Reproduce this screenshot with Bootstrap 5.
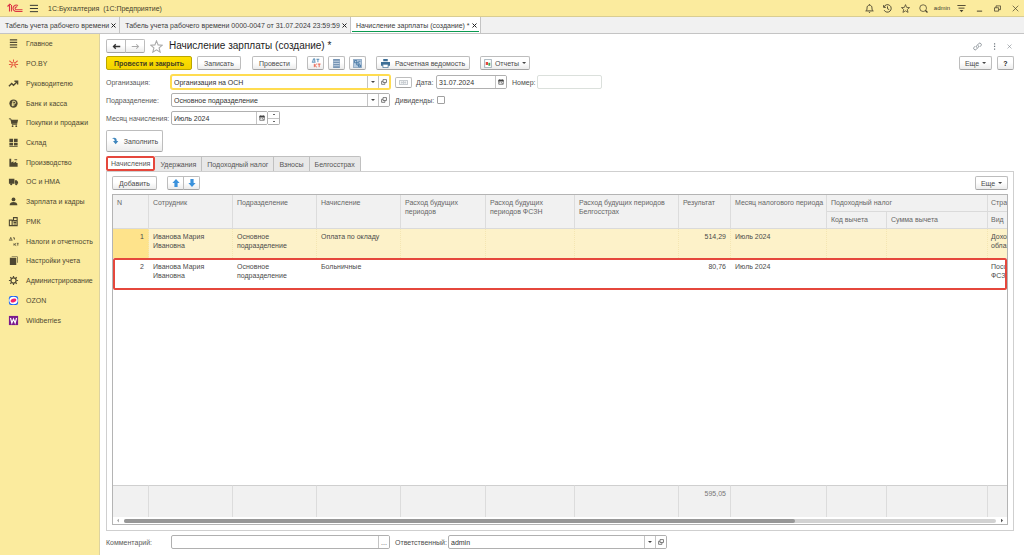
<!DOCTYPE html>
<html lang="ru">
<head>
<meta charset="utf-8">
<meta name="viewport" content="width=device-width, initial-scale=1">
<title>1С:Бухгалтерия — Начисление зарплаты</title>
<link href="https://cdn.jsdelivr.net/npm/bootstrap@5.3.0/dist/css/bootstrap.min.css" rel="stylesheet">
<style>
  body { font: 7px/9px "Liberation Sans", Arial, sans-serif; color: #4d4d4d; background: #fff; }
  svg { display: block; flex: none; }
  a { color: inherit; text-decoration: none; }
  .ic { width: 9px; height: 9px; fill: none; stroke: currentColor; stroke-width: 1; }
  .solid { fill: currentColor; stroke: none; }

  .topbar { height: 17px; background: #fbeb9e; border-bottom: 1px solid #d9cd92; color: #453f2c; }
  .topbar .logo { margin: 0 6px 0 7px; }
  .topbar .product { margin-left: 10px; }
  .topbar .cell { width: 18px; height: 16px; padding: 0; border: 0; background: none; color: inherit; display: flex; align-items: center; justify-content: center; }
  .topbar .user { width: 20px; font-size: 6px; }
  .wintabs { height: 17px; background: #f1f1f1; border-bottom: 1px solid #c4c4c4; color: #3c3c3c; }
  .wintab { position: relative; padding: 0 3px 0 5px; border-right: 1px solid #c4c4c4; gap: 2px; }
  .wintab svg { width: 5px; height: 5px; stroke: #222; stroke-width: 2; }
  .wintab.current { background: #fff; }
  .wintab.current::after { content: ""; position: absolute; left: 1px; right: 1px; bottom: 1px; height: 1px; background: #0a9a50; }

  .side { width: 100px; flex: none; background: #fbeb9e; border-right: 1px solid #ddd3a0; color: #4e4832; }
  .side nav { display: grid; grid-auto-rows: 1fr; height: 296px; }
  .side a { display: flex; align-items: center; gap: 7px; padding-left: 8px; }
  .side svg { width: 11px; height: 11px; }

  .work { padding: 5px 10px 6px 6px; min-width: 0; }
  .btn.b1 { font-size: 7px; line-height: 9px; height: 14px; padding: 0 5px; border: 1px solid #bdbdbd; border-bottom-color: #a4a4a4; border-radius: 2px; color: #4a4a4a; background: linear-gradient(#fff 45%, #ececec); display: inline-flex; align-items: center; justify-content: center; gap: 5px; white-space: nowrap; }
  .btn.b1.main { background: linear-gradient(#ffe100, #f2d200); border-color: #bba600; color: #453f20; font-weight: bold; }
  .btn.b1.sq { width: 17px; padding: 0; }
  .btn.b1.drop { padding: 0 2px; gap: 3px; }
  .btn.b1.fill { height: 22px; width: 57px; padding: 0; }
  .caret { width: 4px; height: 2px; flex: none; background: #444; clip-path: polygon(0 0, 100% 0, 50% 100%); }
  h1 { font-size: 10px; line-height: 12px; margin: 0 0 0 6px; color: #1d1d1d; font-weight: normal; }
  .formtools { gap: 9px; padding-right: 2px; }

  .lbl { width: 65px; flex: none; white-space: nowrap; color: #5a5a5a; }
  .fld { height: 14px; border: 1px solid #b0b0b0; border-radius: 2px; background: #fff; display: flex; overflow: hidden; }
  .fld input { min-width: 0; flex: 1; border: 0; padding: 1px 2px 0; font-size: 7px; line-height: 11px; color: #333; background: none; outline: 0; }
  .fld button { width: 11px; flex: none; border: 0; border-left: 1px solid #c4c4c4; background: #fff; padding: 0; display: flex; align-items: center; justify-content: center; color: #555; }
  .fld svg { width: 6px; height: 6px; }
  .wide { width: 219px; }
  .hot { border-color: #ffdc50; box-shadow: 0 0 0 1px #ffdc50; }
  .date { width: 71px; }
  .pale { border-color: #dbe0dc; width: 65px; }
  .tick { width: 8px; height: 8px; margin: 0; appearance: none; border: 1px solid #a0a0a0; border-radius: 1px; background: #fff; }
  .spin { width: 12px; flex-direction: column; border-radius: 0 2px 2px 0; border-left: 0; }
  .spin button { width: 100%; flex: 1; border-left: 0; }
  .spin button + button { border-top: 1px solid #c4c4c4; }
  .spin button::before { content: ""; width: 2px; height: 1px; background: #666; }

  .sect button { height: 15px; border: 1px solid #c0c0c0; border-left: 0; border-bottom: 0; background: #e8e8e8; color: #555; font-size: 7px; line-height: 9px; padding: 0 5px; }
  .sect button:last-child { border-radius: 0 2px 0 0; }
  .sect button.current { background: #fff; border: 2px solid #e5473c; border-radius: 2px; padding: 0 3px; }
  .pane { border: 1px solid #cfcfcf; padding: 4px 5px 5px; flex: 1; }
  .gridbox { border: 1px solid #b4b4b4; flex: 1; margin-top: 4px; overflow: hidden; }
  .gridbox table { table-layout: fixed; width: 100%; border-collapse: separate; border-spacing: 0; color: #4a4a4a; }
  .gridbox th, .gridbox td { font-weight: normal; vertical-align: top; padding: 3px 4px 0; border-right: 1px solid #dcdcdc; }
  .gridbox th { background: #f1f1f1; color: #666; height: 17px; border-bottom: 1px solid #dadada; }
  .gridbox td { height: 32px; border-color: transparent; }
  .gridbox tr > :last-child:not([rowspan]) { border-right: 0; white-space: nowrap; padding-left: 3px; padding-right: 0; }
  .gridbox .sel td { height: 29px; background: #fdf2c9; border-right: 1px dotted #f4e6b2; }
  .gridbox .sel td:first-child { background: #fee38b; }
  .gridbox .marked { outline: 2px solid #e5473c; outline-offset: -2px; border-radius: 2px; }
  .gridbox .marked td { padding-top: 4px; }
  .gridbox .totals td { background: #f1f1f1; height: 32px; border-right: 1px solid #dcdcdc; border-top: 1px solid #cfcfcf; color: #777; }
  .hbar { height: 7px; padding: 0 4px; gap: 5px; }
  .hbar .track { flex: 1; height: 4px; border-radius: 2px; background: #d2d2d2; }
  .hbar .thumb { height: 4px; border-radius: 2px; background: #979797; }
  .tri { width: 2px; height: 4px; background: #555; clip-path: polygon(0 0, 100% 50%, 0 100%); }
  .tri.back { background: #aaa; clip-path: polygon(100% 0, 0 50%, 100% 100%); }
</style>
</head>
<body class="d-flex flex-column min-vh-100">

<svg width="0" height="0" class="position-absolute" aria-hidden="true">
  <symbol id="x" viewBox="0 0 10 10"><path d="M1 1l8 8M9 1l-8 8"/></symbol>
  <symbol id="star" viewBox="0 0 12 12"><path d="M6 .8l1.5 3.7 3.9.3-3 2.5 1 3.9L6 9.1l-3.4 2.1 1-3.9-3-2.5 3.9-.3z"/></symbol>
  <symbol id="open" viewBox="0 0 8 8"><path d="M2.7.8h4.6v3.8H2.7zM2.7 3H.8v4.1h4.4V4.6"/></symbol>
  <symbol id="cal" viewBox="0 0 8 8"><path d="M1 2h6v5H1z" fill="none" stroke="#555"/><path d="M.5 1h7v2.2h-7zM2 0h1v1H2zM5 0h1v1H5zM2 4h1v1H2zM4 4h1v1H4zM5 5.500h1v1H5z" fill="#444" stroke="none"/></symbol>
</svg>

<header class="topbar d-flex align-items-center">
  <svg width="16" height="10" viewBox="0 0 32 20" class="logo" fill="none" stroke="#dc3545" stroke-width="2.200" role="img" aria-label="1С"><path d="M1 7l4-4v14M9 4v13M5 3h3"/><path d="M22 5a6.500 6.500 0 1 0-4 12h13"/><path d="M20.500 8a3 3 0 1 0-2.500 5.500h13"/></svg>
  <button class="btn p-0 border-0" aria-label="Меню"><svg class="ic" viewBox="0 0 10 10"><path d="M1 1.500h9M1 5h9M1 8.500h9"/></svg></button>
  <span class="product">1С:Бухгалтерия &nbsp;(1С:Предприятие)</span>
  <div class="d-flex ms-auto">
    <button class="cell" aria-label="Уведомления"><svg class="ic" viewBox="0 0 12 12"><path d="M1 9.200c1.500-1 1.700-2 1.700-4C2.700 3 4 1.600 6 1.600S9.300 3 9.300 5.200c0 2 .2 3 1.700 4zM6 .3v1.200M4.800 10.500c.6 1 1.800 1 2.400 0" stroke-width="1.200"/></svg></button>
    <button class="cell" aria-label="История"><svg class="ic" viewBox="0 0 12 12"><path d="M1.300 4A5 5 0 1 1 1.500 8.200M.8 1.500v3h3M6 3.200v3.100l2.300 1.200" stroke-width="1.200"/></svg></button>
    <button class="cell" aria-label="Избранное"><svg class="ic"><use href="#star"/></svg></button>
    <button class="cell" aria-label="Поиск"><svg class="ic" viewBox="0 0 12 12"><circle cx="5.500" cy="5.500" r="4.500"/><path d="M8.500 8.500l2.800 2.800" stroke-width="1.800"/></svg></button>
    <a href="#" class="cell user">admin</a>
    <button class="cell" aria-label="Настройки"><svg class="ic" viewBox="0 0 12 12"><path d="M.5 2h11M2 5.500h8" stroke-width="1.200"/><path d="M3.500 8h5L6 11z" fill="currentColor" stroke="none"/></svg></button>
    <button class="cell" aria-label="Свернуть"><svg class="ic" viewBox="0 0 12 12"><path d="M2.500 9.500h7" stroke-width="1.300"/></svg></button>
    <button class="cell" aria-label="Развернуть"><svg class="ic" viewBox="0 0 12 12"><path d="M2 5h5.500v4.500H2zM4 5V2.500h6v5H7.500"/></svg></button>
    <button class="cell" aria-label="Закрыть"><svg class="ic" style="width:7px"><use href="#x"/></svg></button>
  </div>
</header>

<div class="wintabs d-flex">
  <a href="#" class="wintab d-flex align-items-center">Табель учета рабочего времени <svg><use href="#x"/></svg></a>
  <a href="#" class="wintab d-flex align-items-center">Табель учета рабочего времени 0000-0047 от 31.07.2024 23:59:59 <svg><use href="#x"/></svg></a>
  <a href="#" class="wintab current d-flex align-items-center">Начисление зарплаты (создание) * <svg><use href="#x"/></svg></a>
</div>

<div class="d-flex flex-grow-1">
  <aside class="side">
    <nav aria-label="Разделы">
      <a href="#"><svg class="ic" viewBox="0 0 12 12"><path d="M2 2h8M2 4.700h8M2 7.400h8M2 10.100h8" stroke-width="1.300"/></svg>Главное</a>
      <a href="#"><svg class="ic" viewBox="0 0 12 12" style="color:#e4573f"><path d="M6 4V1.500M4.500 5.500L1.500 3M7.500 5.500l3-2.500M1 7h3M8 7h3M5 7.500L3 10.500M7 7.500l2 3" stroke-width="1.100"/><circle cx="6" cy="6" r="1.500"/></svg>PO.BY</a>
      <a href="#"><svg class="ic" viewBox="0 0 12 12"><path d="M1 9l3-3 2 2 4-4M7 3.500h3.500V7" stroke-width="1.500"/></svg>Руководителю</a>
      <a href="#"><svg class="ic" viewBox="0 0 12 12"><circle cx="6" cy="6" r="4.500" class="solid"/><path d="M5.200 9V3.500h1.500a1.500 1.500 0 0 1 0 3H4M4 7.800h3" stroke="#fbeb9e"/></svg>Банк и касса</a>
      <a href="#"><svg class="ic" viewBox="0 0 12 12"><path d="M1 2h2l1.500 6H10" /><path d="M3 3h8L10 7.300H4z" class="solid"/><circle cx="5" cy="10" r="1" class="solid"/><circle cx="9" cy="10" r="1" class="solid"/></svg>Покупки и продажи</a>
      <a href="#"><svg class="ic solid" viewBox="0 0 12 12"><path d="M1.500 2h4v3.500h-4zM6.500 2h4v3.500h-4zM1.500 6.300h4v3h-4zM6.500 6.300h4v3h-4zM1.500 10h9v.8h-9z"/></svg>Склад</a>
      <a href="#"><svg class="ic solid" viewBox="0 0 12 12"><path d="M1.500 10.500V2h2v4L6 4.500V6.500L9 5v1.500h1.500v4z"/><path d="M7 2.500h3v1H7z"/></svg>Производство</a>
      <a href="#"><svg class="ic solid" viewBox="0 0 12 12"><path d="M1 3h6v5.500H1zM7.500 4.500h2L11 6.500v2H7.500z"/><circle cx="3.500" cy="9" r="1.200"/><circle cx="9" cy="9" r="1.200"/></svg>ОС и НМА</a>
      <a href="#"><svg class="ic solid" viewBox="0 0 12 12"><circle cx="6" cy="3.700" r="2.100"/><path d="M1.800 10.200c0-3 1.800-3.700 4.200-3.700s4.200.7 4.200 3.700z"/></svg>Зарплата и кадры</a>
      <a href="#"><svg class="ic" viewBox="0 0 12 12"><path d="M1.500 4.500h3v6h-3zM4.500 5h5.500v5.500H4.500zM6 5V1.800h4V5M6 7h3M6 8.800h3" stroke-width="1.200"/></svg>РМК</a>
      <a href="#"><svg class="ic" viewBox="0 0 12 12"><path d="M1 4.500h4M2 4l1-2.500L4 4M5.500 2H7v2M6.500 8v2.500M9 8l-2 1.200L9 10.500M10 8h1.500M10.700 8v2.500" stroke-width=".9"/></svg>Налоги и отчетность</a>
      <a href="#"><svg class="ic solid" viewBox="0 0 12 12"><path d="M4 1.500h6.500v7H9.800V2.200H4zM2 3h7v8H2z"/></svg>Настройки учета</a>
      <a href="#"><svg class="ic" viewBox="0 0 12 12"><circle cx="6" cy="6" r="2.800" stroke-width="1.300"/><path d="M6 1v2M6 9v2M1 6h2M9 6h2M2.500 2.500l1.300 1.300M8.200 8.200l1.300 1.300M9.500 2.500L8.200 3.800M3.800 8.200L2.500 9.500" stroke-width="1.300"/></svg>Администрирование</a>
      <a href="#"><svg viewBox="0 0 12 12"><rect x="1" y="1" width="10" height="10" rx="2.500" fill="#1660f5"/><ellipse cx="6" cy="6" rx="4.600" ry="4" fill="#fff"/><ellipse cx="6" cy="6" rx="3.300" ry="1.900" transform="rotate(-20 6 6)" fill="#f5206b"/></svg>OZON</a>
      <a href="#"><svg viewBox="0 0 12 12"><rect x="1" y="1" width="10" height="10" fill="#7b1a8c"/><path d="M2.700 3.300L4.200 8.700 6 4.500l1.800 4.200 1.500-5.400" fill="none" stroke="#fff" stroke-width="1.300"/></svg>Wildberries</a>
    </nav>
  </aside>

  <main class="work flex-grow-1 d-flex flex-column">
    <div class="d-flex align-items-center">
      <div class="btn-group">
        <button class="btn b1" style="width:20px" aria-label="Назад"><svg class="ic" style="color:#333" viewBox="0 0 12 12"><path d="M11 6H2M5 3L2 6l3 3" stroke-width="1.800"/></svg></button>
        <button class="btn b1" style="width:20px" aria-label="Вперед"><svg class="ic" style="color:#aaa" viewBox="0 0 12 12"><path d="M1 6h9M7 3l3 3-3 3" stroke-width="1.400"/></svg></button>
      </div>
      <svg class="ic" style="width:13px;height:13px;color:#aaa;margin-left:5px"><use href="#star"/></svg>
      <h1>Начисление зарплаты (создание) *</h1>
      <div class="formtools d-flex ms-auto align-items-center text-secondary">
        <svg class="ic" viewBox="0 0 12 12"><path d="M5 7.500a2 2 0 0 1 0-2.500l2.500-2.800a2 2 0 0 1 3 2.800L9 6.500M7 4.500A2 2 0 0 1 7 7L4.500 9.800a2 2 0 0 1-3-2.800L3 5.500"/></svg>
        <svg class="ic solid" style="width:7px" viewBox="0 0 8 12"><path d="M3.300 1.500h1.600v1.800H3.300zM3.300 5h1.600v1.800H3.300zM3.300 8.500h1.600v1.800H3.300z"/></svg>
        <svg class="ic" style="width:5px"><use href="#x"/></svg>
      </div>
    </div>

    <div class="d-flex align-items-center" style="margin-top:3px">
      <button class="btn b1 main" style="width:86px">Провести и закрыть</button>
      <button class="btn b1" style="width:44px;margin-left:5px">Записать</button>
      <button class="btn b1" style="width:45px;margin-left:11px">Провести</button>
      <button class="btn b1 sq" style="margin-left:10px" aria-label="Дт Кт"><svg width="10" height="10" viewBox="0 0 12 12" fill="none"><path d="M1 5h4.500M2 4.500L3 1h1.500v3.500M6.500 1.500H10M8.300 1.500V5" stroke="#3a78a8"/><path d="M4 7v4M7 7L4.500 9 7 11M8 7.300h3.500M9.800 7v4" stroke="#e8503a"/></svg></button>
      <button class="btn b1 sq" style="margin-left:4px" aria-label="Список"><svg width="9" height="9" viewBox="0 0 12 12"><path fill="#7795b5" d="M1.500 0h9v12h-9z"/><path stroke="#dbe6f0" d="M2 3h8M2 6h8M2 9h8"/></svg></button>
      <button class="btn b1 sq" style="margin-left:4px" aria-label="Структура"><svg width="9" height="9" viewBox="0 0 12 12" fill="none"><path fill="#b5cbe0" stroke="#7795b5" d="M.5.5h11v11H.5z"/><path stroke="#376b9c" d="M2 2h3v3H2zM5 5h3v3H5zM7.500 8H10v2.500H7.500zM7 3h3"/></svg></button>
      <button class="btn b1" style="width:94px;margin-left:10px"><svg width="9" height="9" viewBox="0 0 12 12"><path fill="#3e6f96" d="M3 0h6v3H3zM0 4h12v5H0z"/><path fill="#fff" stroke="#3e6f96" d="M2.500 7h7v4.500h-7z"/></svg>Расчетная ведомость</button>
      <button class="btn b1 drop" style="width:50px;margin-left:10px"><svg width="8" height="9" viewBox="0 0 10 12"><path fill="#fff" stroke="#8899a5" d="M.5.500h9v11h-9z"/><path fill="#e5473c" d="M2 4h3v4H2z"/><path fill="#3da452" d="M5.500 5H8v4H5.500z"/></svg>Отчеты<i class="caret"></i></button>
      <button class="btn b1 drop ms-auto" style="width:33px">Еще<i class="caret"></i></button>
      <button class="btn b1 sq" style="margin-left:5px;color:#222" aria-label="Справка"><b>?</b></button>
    </div>

    <div class="d-flex align-items-center" style="margin-top:5px">
      <label class="lbl" for="org">Организация:</label>
      <div class="fld wide hot"><input id="org" value="Организация на ОСН"><button aria-label="Выбрать"><i class="caret"></i></button><button aria-label="Открыть"><svg class="ic"><use href="#open"/></svg></button></div>
      <button class="btn b1" style="width:17px;height:11px;padding:0;margin:0 4px 0 5px;background:#fff" aria-label="Реквизиты"><svg width="9" height="5" viewBox="0 0 12 7" fill="none" stroke="#a5adb5"><path d="M.5.500h11v6H.5zM3 2v3M5 2.500h2v2H5zM9 2v3"/></svg></button>
      <label for="dt" style="width:20px">Дата:</label>
      <div class="fld date"><input id="dt" value="31.07.2024"><button aria-label="Календарь"><svg><use href="#cal"/></svg></button></div>
      <label for="num" style="width:25px;margin-left:5px">Номер:</label>
      <div class="fld pale"><input id="num"></div>
    </div>
    <div class="d-flex align-items-center" style="margin-top:4px">
      <label class="lbl" for="dep">Подразделение:</label>
      <div class="fld wide"><input id="dep" value="Основное подразделение"><button aria-label="Выбрать"><i class="caret"></i></button><button aria-label="Открыть"><svg class="ic"><use href="#open"/></svg></button></div>
      <label for="div" style="width:42px;margin-left:5px">Дивиденды:</label>
      <input type="checkbox" id="div" class="tick">
    </div>
    <div class="d-flex align-items-center" style="margin-top:4px">
      <label class="lbl" for="mon">Месяц начисления:</label>
      <div class="fld" style="width:97px"><input id="mon" value="Июль 2024"><button aria-label="Календарь"><svg><use href="#cal"/></svg></button></div>
      <div class="fld spin"><button aria-label="Больше"></button><button aria-label="Меньше"></button></div>
    </div>
    <div style="margin-top:5px" class="d-flex"><button class="btn b1 fill"><svg width="8" height="8" viewBox="0 0 12 12"><path d="M1 2c5-2 8 0 7.500 4H11l-4 5-4-5h2.500C6 4 4 2.500 1 2z" fill="#3f86bd"/></svg>Заполнить</button></div>

    <div class="sect d-flex" style="margin-top:4px" role="tablist">
      <button role="tab" aria-selected="true" class="current">Начисления</button><button role="tab">Удержания</button><button role="tab">Подоходный налог</button><button role="tab">Взносы</button><button role="tab">Белгосстрах</button>
    </div>
    <section class="pane d-flex flex-column">
      <div class="d-flex">
        <button class="btn b1" style="width:45px">Добавить</button>
        <div class="btn-group" style="margin-left:10px">
          <button class="btn b1" style="width:17px" aria-label="Вверх"><svg width="8" height="8" viewBox="0 0 10 10"><path fill="#3b92dc" d="M5 0l4.500 5H7v5H3V5H.5z"/></svg></button>
          <button class="btn b1" style="width:17px" aria-label="Вниз"><svg width="8" height="8" viewBox="0 0 10 10"><path fill="#3b92dc" d="M5 10l4.500-5H7V0H3v5H.5z"/></svg></button>
        </div>
        <button class="btn b1 drop ms-auto" style="width:33px">Еще<i class="caret"></i></button>
      </div>
      <div class="gridbox d-flex flex-column">
        <table>
          <colgroup><col style="width:36px"><col style="width:84px"><col style="width:84px"><col style="width:84px"><col style="width:85px"><col style="width:89px"><col style="width:104px"><col style="width:52px"><col style="width:96px"><col style="width:60px"><col style="width:101px"><col></colgroup>
          <thead>
            <tr><th rowspan="2">N</th><th rowspan="2">Сотрудник</th><th rowspan="2">Подразделение</th><th rowspan="2">Начисление</th><th rowspan="2">Расход будущих<br>периодов</th><th rowspan="2">Расход будущих<br>периодов ФСЗН</th><th rowspan="2">Расход будущих периодов Белгосстрах</th><th rowspan="2">Результат</th><th rowspan="2" class="text-nowrap">Месяц налогового периода</th><th colspan="2">Подоходный налог</th><th>Стра</th></tr>
            <tr><th>Код вычета</th><th>Сумма вычета</th><th>Вид</th></tr>
          </thead>
          <tbody>
            <tr class="sel"><td class="text-end">1</td><td>Иванова Мария Ивановна</td><td>Основное подразделение</td><td>Оплата по окладу</td><td></td><td></td><td></td><td class="text-end">514,29</td><td>Июль 2024</td><td></td><td></td><td>Дохо<br>обла</td></tr>
            <tr class="marked"><td class="text-end">2</td><td>Иванова Мария Ивановна</td><td>Основное подразделение</td><td>Больничные</td><td></td><td></td><td></td><td class="text-end">80,76</td><td>Июль 2024</td><td></td><td></td><td>Посо<br>ФСЗ</td></tr>
          </tbody>
        </table>
        <table class="mt-auto">
          <colgroup><col style="width:36px"><col style="width:84px"><col style="width:84px"><col style="width:84px"><col style="width:85px"><col style="width:89px"><col style="width:104px"><col style="width:52px"><col style="width:96px"><col style="width:60px"><col style="width:101px"><col></colgroup>
          <tbody><tr class="totals"><td></td><td></td><td></td><td></td><td></td><td></td><td></td><td class="text-end">595,05</td><td></td><td></td><td></td><td></td></tr></tbody>
        </table>
        <div class="hbar d-flex align-items-center"><i class="tri back"></i><div class="track"><div class="thumb" style="width:77%"></div></div><i class="tri"></i></div>
      </div>
    </section>

    <div class="d-flex align-items-center" style="margin-top:4px">
      <label class="lbl" for="com">Комментарий:</label>
      <div class="fld wide"><input id="com"><button aria-label="Выбрать">...</button></div>
      <label for="resp" style="width:53px;margin-left:5px">Ответственный:</label>
      <div class="fld wide"><input id="resp" value="admin"><button aria-label="Выбрать"><i class="caret"></i></button><button aria-label="Открыть"><svg class="ic"><use href="#open"/></svg></button></div>
    </div>
  </main>
</div>
<script src="https://cdn.jsdelivr.net/npm/bootstrap@5.3.0/dist/js/bootstrap.bundle.min.js"></script>
</body>
</html>
